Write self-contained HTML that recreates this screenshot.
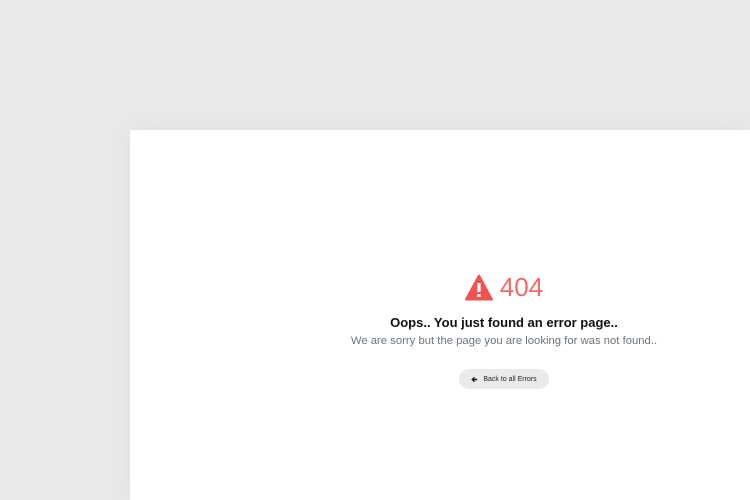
<!DOCTYPE html>
<html><head><style>
body{margin:0;width:750px;height:500px;background:#e9eaec;font-family:"Liberation Sans",sans-serif;overflow:hidden;position:relative}
.panel{position:absolute;left:130px;top:130px;width:620px;height:370px;background:#fff;box-shadow:0 0 30px rgba(0,0,0,0.06)}
.c{position:absolute;left:129px;width:750px;text-align:center}
</style></head><body>
<div class="panel"></div>
<div class="c" style="top:270px;height:34px">
 <div style="display:inline-flex;align-items:center">
  <svg width="28" height="27" viewBox="0 0 28 27"><path d="M14 1.5 L27 25.5 L1 25.5 Z" fill="#ef5350" stroke="#ef5350" stroke-width="2" stroke-linejoin="round"/><rect x="12.4" y="9" width="3.2" height="9" fill="#fff"/><rect x="12.4" y="20" width="3.2" height="3" fill="#fff"/></svg>
  <span style="font-size:26px;color:#f06b68;margin-left:7px;line-height:34px">404</span>
 </div>
</div>
<div class="c" style="top:315px;font-size:13px;font-weight:bold;color:#111">Oops.. You just found an error page..</div>
<div class="c" style="top:335px;font-size:11.3px;color:#6c757d">We are sorry but the page you are looking for was not found..</div>
<div style="position:absolute;left:459px;top:369px;width:90px;height:20px;border-radius:10px;background:#e9eaec;font-size:7px;color:#222;display:flex;align-items:center;justify-content:center">
 <svg width="7" height="7" viewBox="0 0 8 8" style="margin-right:5px"><path d="M7 4H2M4 1.5 1.5 4 4 6.5" stroke="#111" stroke-width="1.6" fill="none"/></svg>Back to all Errors</div>
</body></html>
